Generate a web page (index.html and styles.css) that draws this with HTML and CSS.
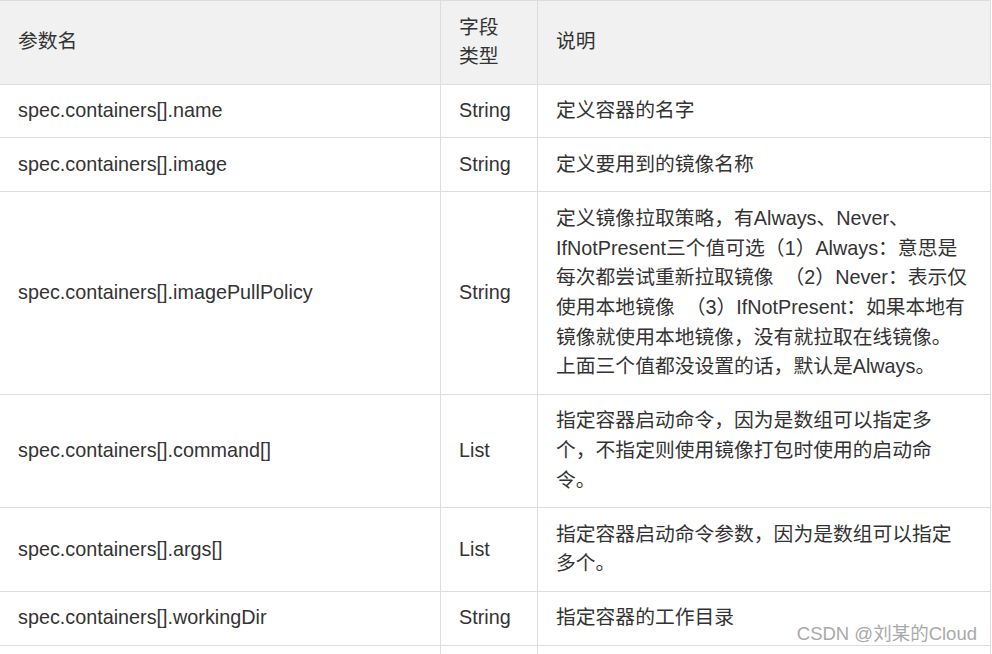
FILE: index.html
```html
<!DOCTYPE html>
<html lang="zh-CN">
<head>
<meta charset="utf-8">
<title>spec.containers 参数</title>
<link rel="stylesheet" href="styles.css">
</head>
<body>
<div class="page">
  <table class="params">
    <colgroup>
      <col class="c-name">
      <col class="c-type">
      <col class="c-desc">
    </colgroup>
    <thead>
      <tr>
        <th>参数名</th>
        <th>字段<br>类型</th>
        <th>说明</th>
      </tr>
    </thead>
    <tbody>
      <tr>
        <td>spec.containers[].name</td>
        <td>String</td>
        <td>定义容器的名字</td>
      </tr>
      <tr>
        <td>spec.containers[].image</td>
        <td>String</td>
        <td>定义要用到的镜像名称</td>
      </tr>
      <tr>
        <td>spec.containers[].imagePullPolicy</td>
        <td>String</td>
        <td class="lines">定义镜像拉取策略，有Always、Never、<br>IfNotPresent三个值可选（1）Always：意思是<br>每次都尝试重新拉取镜像&nbsp; （2）Never：表示仅<br>使用本地镜像&nbsp; （3）IfNotPresent：如果本地有<br>镜像就使用本地镜像，没有就拉取在线镜像。<br>上面三个值都没设置的话，默认是Always。</td>
      </tr>
      <tr>
        <td>spec.containers[].command[]</td>
        <td>List</td>
        <td class="lines">指定容器启动命令，因为是数组可以指定多<br>个，不指定则使用镜像打包时使用的启动命<br>令。</td>
      </tr>
      <tr>
        <td>spec.containers[].args[]</td>
        <td>List</td>
        <td class="lines">指定容器启动命令参数，因为是数组可以指定<br>多个。</td>
      </tr>
      <tr>
        <td>spec.containers[].workingDir</td>
        <td>String</td>
        <td>指定容器的工作目录</td>
      </tr>
      <tr class="next-row">
        <td></td>
        <td></td>
        <td></td>
      </tr>
    </tbody>
  </table>
  <div class="watermark">CSDN @刘某的Cloud</div>
</div>
</body>
</html>
```
FILE: styles.css
```css
html, body {
  margin: 0;
  padding: 0;
  background: #ffffff;
}

body {
  font-family: "Liberation Sans", Arial, "Noto Sans CJK SC", sans-serif;
  color: #333333;
  overflow: hidden;
}

.page {
  position: relative;
  width: 992px;
  height: 654px;
  overflow: hidden;
}

.params {
  border-collapse: collapse;
  table-layout: fixed;
  width: 991px;
  margin-left: -1px;
  font-size: 19.8px;
  line-height: 29.7px;
}

.c-name { width: 441px; }
.c-type { width: 97px; }
.c-desc { width: 453px; }

.params th,
.params td {
  border: 1px solid #dddddd;
  padding: 11.6px 18px;
  text-align: left;
  vertical-align: middle;
  font-weight: normal;
}

.params th {
  background: #f1f1f1;
}

.params td.lines {
  white-space: nowrap;
}

.params .next-row td {
  height: 30px;
}

.watermark {
  position: absolute;
  right: 15px;
  bottom: 9px;
  font-size: 18.5px;
  line-height: 22px;
  color: #a9a9a9;
  white-space: nowrap;
}
```
